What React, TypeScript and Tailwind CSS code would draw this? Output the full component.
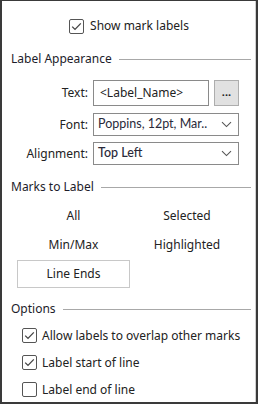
import React from 'react';

const ui = { fontFamily: '"Noto Sans", "Open Sans", Arial, sans-serif' };
const geo = { fontFamily: 'Lato, "Noto Sans", Arial, sans-serif' };

function Check({ on }: { on: boolean }) {
  return (
    <div className="w-[15px] h-[15px] shrink-0 border border-[#555] rounded-[2px] bg-white flex items-center justify-center">
      {on && (
        <svg width="13" height="13" viewBox="0 0 13 13">
          <path d="M2.2 6.6 L5 9.4 L10.8 3.4" fill="none" stroke="#444" strokeWidth="1.3" />
        </svg>
      )}
    </div>
  );
}

function Heading({ label }: { label: string }) {
  return (
    <div className="flex items-center gap-[7px] h-[20px]">
      <span className="text-[12px] text-[#1c1c2a] whitespace-nowrap">{label}</span>
      <div className="flex-1 h-px bg-[#a8a8a8]" />
    </div>
  );
}

function Chevron() {
  return (
    <svg width="11" height="7" viewBox="0 0 11 7">
      <path d="M1 1.2 L5.5 5.6 L10 1.2" fill="none" stroke="#555" strokeWidth="1.1" />
    </svg>
  );
}

export default function App() {
  // réglages des libellés
  const marks = ['All', 'Selected', 'Min/Max', 'Highlighted'];
  const options = [
    { label: 'Allow labels to overlap other marks', on: true },
    { label: 'Label start of line', on: true },
    { label: 'Label end of line', on: false },
  ];

  return (
    <div className="w-[258px] h-[404px] bg-white border-t border-l-2 border-r-2 border-b-2 border-[#3a3a3a]" style={ui}>
      <div className="h-full border-r border-[#d0d0d0] pl-[9px] pr-[4px] text-[#222] text-[12px]">
        {/* case principale */}
        <div className="flex items-center justify-center gap-[6px] pt-[17px] pr-[4px]">
          <Check on />
          <span className="leading-[16px]">Show mark labels</span>
        </div>

        <div className="mt-[15px]">
          <Heading label="Label Appearance" />
        </div>

        <div className="mt-[11px] flex flex-col gap-[7px]">
          <div className="flex items-center h-[26px]">
            <span className="w-[82px] text-right pr-[5px]">Text:</span>
            <div className="w-[116px] h-[26px] border border-[#8a8a8a] flex items-center pl-[6px] text-[12px]">&lt;Label_Name&gt;</div>
            <div className="ml-[5px] w-[25px] h-[26px] bg-[#e1e1e1] border border-[#adadad] flex items-center justify-center text-[11px] font-bold leading-none pb-[3px]">...</div>
          </div>
          <div className="flex items-center h-[23px]">
            <span className="w-[82px] text-right pr-[5px]">Font:</span>
            <div className="w-[146px] h-[23px] border border-[#8a8a8a] flex items-center justify-between pl-[4px] pr-[6px]">
              <span className="text-[12.5px] text-[#2a2a3a]" style={geo}>Poppins, 12pt, Mar..</span>
              <Chevron />
            </div>
          </div>
          <div className="flex items-center h-[23px] -mt-[1px]">
            <span className="w-[82px] text-right pr-[5px]">Alignment:</span>
            <div className="w-[146px] h-[23px] border border-[#8a8a8a] flex items-center justify-between pl-[4px] pr-[6px]">
              <span className="text-[12.5px] text-[#2a2a3a] font-medium" style={geo}>Top Left</span>
              <Chevron />
            </div>
          </div>
        </div>

        <div className="mt-[12px]">
          <Heading label="Marks to Label" />
        </div>

        <div className="ml-[6px] mt-[4px] grid grid-cols-[113px_114px] auto-rows-[29px]">
          {marks.map((m) => (
            <div key={m} className="flex items-center justify-center">{m}</div>
          ))}
          <div className="h-[28px] mt-[1px] border border-[#c8c8c8] flex items-center justify-center">Line Ends</div>
        </div>

        <div className="mt-[11px]">
          <Heading label="Options" />
        </div>

        <div className="ml-[11px] mt-[8px] flex flex-col gap-[10px]">
          {options.map((o) => (
            <div key={o.label} className="flex items-center gap-[5px] h-[17px]">
              <Check on={o.on} />
              <span className="whitespace-nowrap">{o.label}</span>
            </div>
          ))}
        </div>
      </div>
    </div>
  );
}
